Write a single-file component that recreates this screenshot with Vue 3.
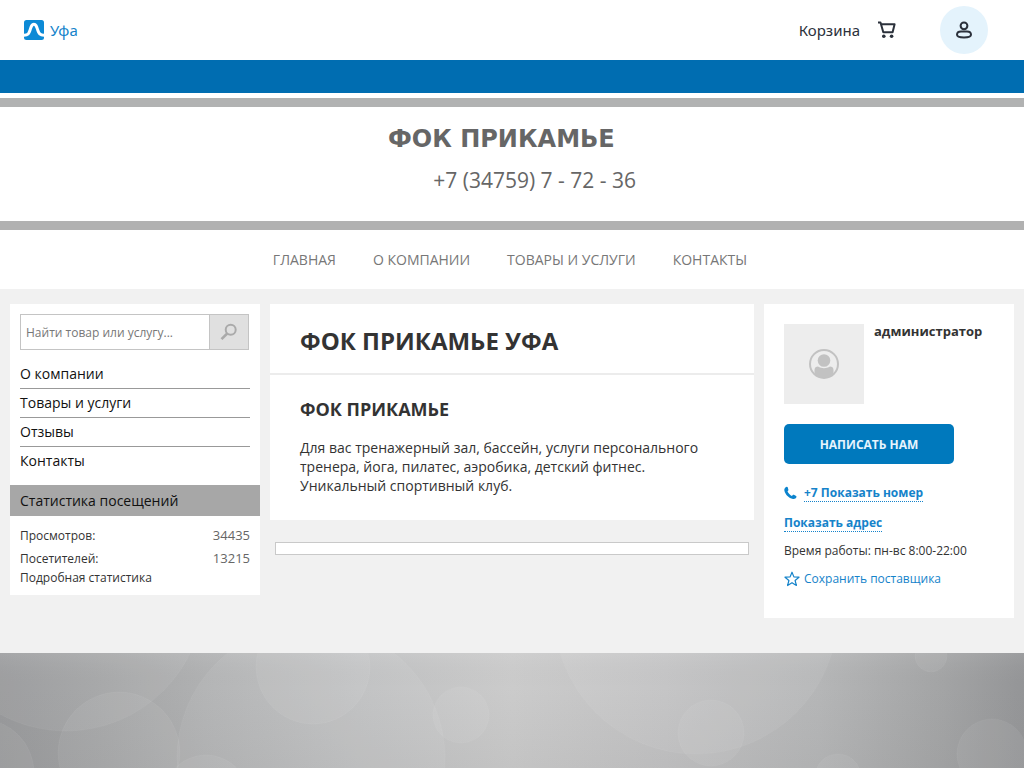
<script setup>
const nav = ['ГЛАВНАЯ', 'О КОМПАНИИ', 'ТОВАРЫ И УСЛУГИ', 'КОНТАКТЫ']
const menu = ['О компании', 'Товары и услуги', 'Отзывы', 'Контакты']
</script>

<template>
  <div class="page">
    <header class="topbar">
      <a href="#" class="city">
        <svg width="20" height="20" viewBox="0 0 20 20" aria-hidden="true">
          <rect width="20" height="20" rx="2.5" fill="#0c8ad6" />
          <path d="M0 15.200C4.200 15.200 4.900 13.500 6 10.200C7.300 6.300 7.800 4.300 9.900 4.300S12.500 6.300 13.800 10.200C14.900 13.500 15.800 15.200 20 15.200" fill="none" stroke="#fff" stroke-width="3" />
        </svg>
        <span>Уфа</span>
      </a>
      <div class="actions">
        <a href="#" class="cart">
          <span>Корзина</span>
          <svg width="18" height="18" viewBox="0 0 18 18" aria-hidden="true">
            <path d="M0 1.400H2.500L5.300 11.200H14.600L16.600 3.300H3.200" fill="none" stroke="#2b313b" stroke-width="2" stroke-linejoin="round" />
            <circle cx="5.800" cy="15.300" r="1.800" fill="#2b313b" />
            <circle cx="13.600" cy="15.300" r="1.800" fill="#2b313b" />
          </svg>
        </a>
        <button class="user" aria-label="Профиль">
          <svg width="18" height="18" viewBox="0 0 18 18" fill="none" stroke="#2b313b" stroke-width="2" aria-hidden="true">
            <circle cx="9" cy="4.800" r="3.400" />
            <path d="M6 10.500H12C14.500 10.500 16 12 16 13.800C16 15.600 13.500 16.500 9 16.500S2 15.600 2 13.800C2 12 3.500 10.500 6 10.500Z" />
          </svg>
        </button>
      </div>
    </header>
    <div class="stripe"></div>

    <section class="banner">
      <div class="brand">
        <div class="name">ФОК ПРИКАМЬЕ</div>
        <div class="tel">+7 (34759) 7 - 72 - 36</div>
      </div>
    </section>

    <nav class="nav">
      <a v-for="n in nav" :key="n" href="#">{{ n }}</a>
    </nav>

    <main class="columns">
      <aside class="card left">
        <form class="search" @submit.prevent>
          <input type="text" placeholder="Найти товар или услугу..." aria-label="Найти товар или услугу" />
          <button aria-label="Найти">
            <svg width="18" height="18" viewBox="0 0 18 18" fill="none" stroke="#aaa" aria-hidden="true">
              <circle cx="10.700" cy="6.800" r="5" stroke-width="2" />
              <path d="M7.200 10.500L1.500 16.200" stroke-width="2.600" />
            </svg>
          </button>
        </form>
        <ul class="menu">
          <li v-for="m in menu" :key="m"><a href="#">{{ m }}</a></li>
        </ul>
        <h3>Статистика посещений</h3>
        <dl class="stats">
          <div><dt>Просмотров:</dt><dd>34435</dd></div>
          <div><dt>Посетителей:</dt><dd>13215</dd></div>
        </dl>
        <a href="#" class="details">Подробная статистика</a>
      </aside>

      <div class="center">
        <article class="card">
          <h1>ФОК ПРИКАМЬЕ УФА</h1>
          <div class="about">
            <h2>ФОК ПРИКАМЬЕ</h2>
            <p>Для вас тренажерный зал, бассейн, услуги персонального тренера, йога, пилатес, аэробика, детский фитнес. Уникальный спортивный клуб.</p>
          </div>
        </article>
        <div class="empty"></div>
      </div>

      <aside class="card right">
        <div class="person">
          <div class="avatar">
            <svg width="30" height="30" viewBox="0 0 30 30" aria-hidden="true">
              <circle cx="15" cy="15" r="14" fill="none" stroke="#c2c2c2" stroke-width="2" />
              <circle cx="15" cy="11.500" r="6.300" fill="#c2c2c2" />
              <path d="M5.500 21C5.500 18.500 7 17.500 9 17.500C12.500 19.800 17.500 19.800 21 17.500C23 17.500 24.500 18.500 24.500 21V25A14 14 0 0 1 5.500 25Z" fill="#c2c2c2" />
            </svg>
          </div>
          <strong>администратор</strong>
        </div>
        <button class="write">НАПИСАТЬ НАМ</button>
        <div class="row phone">
          <svg width="14" height="14" viewBox="0 0 14 14" aria-hidden="true">
            <path d="M2.700 .8C1.200 1.300 0 2.800 .4 4.800C1.400 8.800 4.800 12.200 9 13C10.800 13.200 12.100 12.200 12.500 11C12.600 10.600 12.400 10.300 12.100 10.100L9.900 8.800C9.500 8.600 9.100 8.700 8.800 9L7.900 9.900C6.200 9.200 4.300 7.300 3.500 5.500L4.200 4.600C4.400 4.300 4.500 4 4.400 3.700L3.700 1.300C3.600 .9 3.200 .7 2.700 .8Z" fill="#0b83cd" />
          </svg>
          <a href="#" class="dotted">+7 Показать номер</a>
        </div>
        <div class="row"><a href="#" class="dotted">Показать адрес</a></div>
        <div class="hours">Время работы: пн-вс 8:00-22:00</div>
        <a href="#" class="save">
          <svg width="16" height="16" viewBox="0 0 16 16" aria-hidden="true">
            <path d="M8 1.200L9.900 5.900L15 6.200L11.100 9.500L12.400 14.500L8 11.700L3.600 14.500L4.900 9.500L1 6.200L6.100 5.900Z" fill="none" stroke="#1583ca" stroke-width="1.200" stroke-linejoin="round" />
          </svg>
          <span>Сохранить поставщика</span>
        </a>
      </aside>
    </main>

    <footer class="backdrop">
      <svg viewBox="0 0 1024 115" preserveAspectRatio="xMidYMin slice" aria-hidden="true">
        <defs>
          <linearGradient id="base" x1="0" x2="1" y1="0" y2="0">
            <stop offset="0" stop-color="#98999b" />
            <stop offset=".1" stop-color="#a3a4a5" />
            <stop offset=".2" stop-color="#b0b1b2" />
            <stop offset=".35" stop-color="#bfc0c1" />
            <stop offset=".5" stop-color="#cbcbcb" />
            <stop offset=".65" stop-color="#c2c2c3" />
            <stop offset=".8" stop-color="#b5b6b7" />
            <stop offset=".92" stop-color="#a3a4a5" />
            <stop offset="1" stop-color="#949597" />
          </linearGradient>
          <linearGradient id="shade" x1="0" x2="0" y1="0" y2="1">
            <stop offset="0" stop-color="#fff" stop-opacity=".08" />
            <stop offset=".3" stop-color="#888" stop-opacity="0" />
            <stop offset="1" stop-color="#888" stop-opacity=".11" />
          </linearGradient>
        </defs>
        <rect width="1024" height="115" fill="url(#base)" />
        <rect width="1024" height="115" fill="url(#shade)" />
        <g fill="#fff" fill-opacity=".06" stroke="#fff" stroke-opacity=".04">
          <circle cx="66" cy="-60" r="138" />
          <circle cx="119" cy="100" r="61" />
          <circle cx="-20" cy="120" r="54" />
          <circle cx="311" cy="105" r="134" />
          <circle cx="313" cy="14" r="57" />
          <circle cx="461" cy="62" r="28" />
          <circle cx="206" cy="145" r="43" />
          <circle cx="696" cy="-41" r="142" />
          <circle cx="711" cy="80" r="33" />
          <circle cx="931" cy="3" r="16" />
          <circle cx="838" cy="124" r="23" />
          <circle cx="992" cy="101" r="35" />
        </g>
      </svg>
    </footer>
  </div>
</template>

<style>
body {
  margin: 0;
}
</style>

<style scoped>
.page {
  display: flex;
  flex-direction: column;
  min-height: 100vh;
  background: #fff;
  color: #333;
  font-family: "Open Sans", "Noto Sans", sans-serif;
  font-size: 14px;
  line-height: 19px;
}
.page *,
.page {
  box-sizing: border-box;
}
a {
  color: inherit;
  text-decoration: none;
}
button {
  border: 0;
  padding: 0;
  font: inherit;
  cursor: pointer;
}
svg {
  display: block;
  flex: none;
}
.topbar {
  display: flex;
  align-items: center;
  justify-content: space-between;
  height: 60px;
  padding: 0 36px 0 24px;
  font-family: "Noto Sans", sans-serif;
  font-size: 15px;
}
.city {
  display: flex;
  align-items: center;
  gap: 6px;
  color: #1583ca;
}
.actions {
  display: flex;
  align-items: center;
  gap: 44px;
}
.cart {
  display: flex;
  align-items: center;
  gap: 18px;
  color: #2b313b;
}
.user {
  display: flex;
  align-items: center;
  justify-content: center;
  width: 48px;
  height: 48px;
  border-radius: 50%;
  background: #e4f3fc;
}
.stripe {
  height: 33px;
  background: #006db1;
}
.banner {
  display: flex;
  justify-content: center;
  margin-top: 5px;
  padding: 15px 0 26px;
  border-top: 9px solid #b1b2b2;
  border-bottom: 9px solid #b1b1b1;
}
.brand {
  display: flex;
  flex-direction: column;
  min-width: 248px;
  color: #666;
}
.name {
  font-family: "DejaVu Sans", sans-serif;
  font-size: 24px;
  font-weight: 700;
  line-height: 34px;
}
.tel {
  align-self: flex-end;
  margin-top: 9px;
  font-size: 21px;
  line-height: 30px;
}
.nav {
  display: flex;
  align-items: center;
  justify-content: center;
  gap: 37px;
  height: 59px;
  padding-right: 4px;
  color: #777;
}
.columns {
  display: grid;
  grid-template-columns: 250px 1fr 250px;
  align-items: start;
  gap: 10px;
  padding: 15px 10px 35px;
  background: #f1f1f1;
}
.card {
  background: #fff;
}
.left {
  padding: 10px 10px 9px;
}
.search {
  display: flex;
  height: 36px;
  margin-right: 1px;
  border: 1px solid #c4c4c4;
}
.search input {
  flex: 1;
  min-width: 0;
  padding: 0 5px;
  border: 0;
  border-right: 1px solid #c4c4c4;
  background: #fff;
  font: 12px "Open Sans", sans-serif;
}
.search input::placeholder {
  color: #777;
}
.search button {
  display: flex;
  align-items: center;
  justify-content: center;
  width: 38px;
  background: #e0e0e0;
}
.menu {
  margin: 10px 0;
  padding: 0;
  list-style: none;
  color: #111;
}
.menu li {
  padding: 4px 0 5px;
  border-bottom: 1px solid #999;
}
.menu li:last-child {
  border-bottom: 0;
}
.left h3 {
  margin: 0 -10px;
  padding: 6px 10px;
  background: #a7a7a7;
  color: #111;
  font-size: 14px;
  font-weight: 400;
}
.stats {
  margin: 8px 0 0;
}
.stats div {
  display: flex;
  justify-content: space-between;
  line-height: 23px;
}
.stats dt {
  font-size: 12px;
}
.stats dd {
  margin: 0;
  color: #666;
  font-size: 13px;
}
.details {
  display: block;
  font-size: 12px;
  line-height: 16px;
}
.center {
  min-width: 0;
}
h1 {
  margin: 0;
  padding: 20px 30px 16px;
  border-bottom: 2px solid #ececec;
  font-size: 24px;
  font-weight: 700;
  line-height: 33px;
}
.about {
  padding: 22px 30px 25px;
}
h2 {
  margin: 0 0 17px;
  font-size: 18px;
  font-weight: 700;
  line-height: 24px;
}
p {
  max-width: 424px;
  margin: 0;
}
.empty {
  height: 13px;
  margin: 22px 5px 0;
  border: 1px solid #c9c9c9;
  background: #fff;
}
.right {
  padding: 20px 20px 30px;
  font-size: 12px;
}
.person {
  display: flex;
  gap: 10px;
}
.person strong {
  margin-top: -2px;
  font-size: 13px;
}
.avatar {
  display: flex;
  align-items: center;
  justify-content: center;
  width: 80px;
  height: 80px;
  background: #ededed;
}
.write {
  display: block;
  width: 170px;
  height: 40px;
  margin: 20px 0;
  border-radius: 5px;
  background: #0079bd;
  color: #e6f4fd;
  font-weight: 700;
}
.row {
  display: flex;
  align-items: center;
  margin-bottom: 9px;
}
.phone {
  gap: 6px;
  margin-bottom: 12px;
}
.dotted {
  border-bottom: 1px dotted #1583ca;
  color: #1583ca;
  font-weight: 700;
  line-height: 17px;
}
.save {
  display: flex;
  align-items: center;
  gap: 4px;
  margin-top: 9px;
  color: #1583ca;
}
.backdrop {
  position: relative;
  flex: 1;
  min-height: 115px;
  overflow: hidden;
  background: #b5b6b7;
}
.backdrop svg {
  position: absolute;
  inset: 0;
  width: 100%;
  height: 100%;
}
</style>
